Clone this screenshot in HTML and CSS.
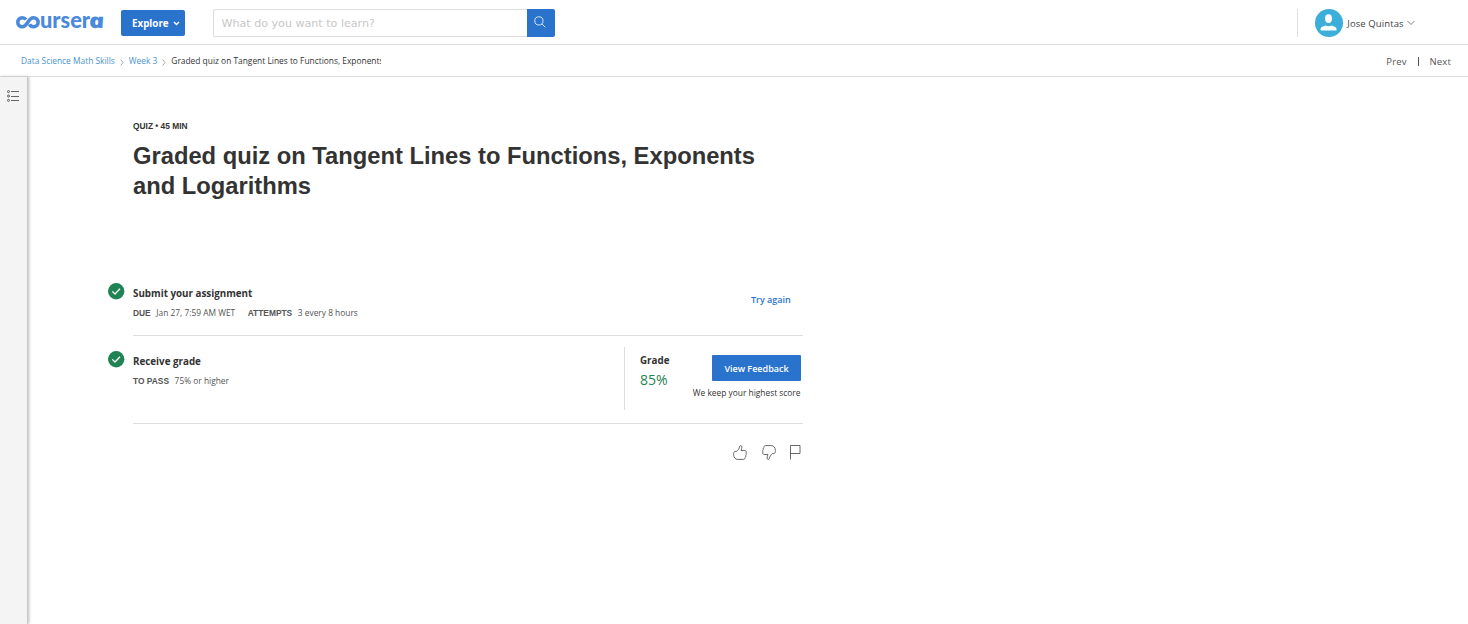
FILE: index.html
```html
<!DOCTYPE html>
<html lang="en">
<head>
<meta charset="utf-8">
<title>Graded quiz | Coursera</title>
<link rel="stylesheet" href="styles.css">
</head>
<body>
<header class="topbar">
  <a class="logo" aria-label="Coursera">
    <svg width="92" height="30" viewBox="0 0 92 30">
      <path class="logo-mark" d="M11 10.600C10.100 9.300 8.900 8.700 7.300 8.700 4.700 8.700 2.800 10.700 2.800 13.200s1.900 4.500 4.500 4.500C12.700 17.700 12.900 8.700 18.500 8.700c2.600 0 4.600 2 4.600 4.500s-2 4.500-4.600 4.500c-2 0-3.300-1-4-2.500"/>
      <text class="logo-text" x="25" y="19.200" textLength="50" lengthAdjust="spacingAndGlyphs">urser</text>
      <text class="logo-text logo-end" transform="translate(75 19.200) skewX(11)" x="0" y="0" textLength="15.500" lengthAdjust="spacingAndGlyphs">a</text>
    </svg>
  </a>
  <button class="explore"><span class="explore-label">Explore</span>
    <svg width="7" height="5" viewBox="0 0 7 5"><path d="M1 1l2.500 2.500L6 1" fill="none" stroke="#fff" stroke-width="1.400"/></svg>
  </button>
  <div class="search">
    <div class="search-field"><span class="search-hint">What do you want to learn?</span></div>
    <button class="search-button" aria-label="Search">
      <svg width="12" height="12" viewBox="0 0 12 12" fill="none" stroke="#fff" stroke-width=".8"><circle cx="4.900" cy="4.900" r="4.100"/><path d="M7.900 7.900l3.400 3.400"/></svg>
    </button>
  </div>
  <div class="account">
    <svg class="avatar" width="28" height="28" viewBox="0 0 28 28"><circle cx="14" cy="14" r="14" fill="#3bafda"/><ellipse cx="13.500" cy="9.600" rx="3.500" ry="4.400" fill="#fff"/><path d="M5.600 21.600v-1.900c0-1.300 2.100-2.400 4.800-3.200 2 1 4.300 1 6.300 0 2.700.8 4.800 1.900 4.800 3.200v1.900z" fill="#fff"/></svg>
    <span class="name">Jose Quintas</span>
    <svg width="8" height="6" viewBox="0 0 8 6"><path d="M.5 1L4 4.500 7.500 1" fill="none" stroke="#777" stroke-width=".9"/></svg>
  </div>
</header>
<nav class="subbar">
  <div class="crumbs">
    <a class="crumb">Data Science Math Skills</a>
    <svg class="sep" width="4" height="7" viewBox="0 0 4 7"><path d="M.7.500L3 3.500.7 6.500"/></svg>
    <a class="crumb">Week 3</a>
    <svg class="sep" width="4" height="7" viewBox="0 0 4 7"><path d="M.7.500L3 3.500.7 6.500"/></svg>
    <span class="crumb current">Graded quiz on Tangent Lines to Functions, Exponents</span>
  </div>
  <div class="pager"><a class="prev">Prev</a><span class="bar"></span><a class="next">Next</a></div>
</nav>
<div class="shell">
  <aside class="rail">
    <svg width="12" height="12" viewBox="0 0 12 12" fill="none" stroke="#555"><path d="M4 1.500h8M4 6.500h8M4 10.500h8" stroke-width=".9"/><circle cx="1.500" cy="1.600" r="1"/><circle cx="1.500" cy="6" r="1"/><circle cx="1.500" cy="10.400" r="1"/></svg>
  </aside>
  <main class="content">
    <p class="kicker">QUIZ • 45 MIN</p>
    <h1 class="title">Graded quiz on Tangent Lines to Functions, Exponents<br>and Logarithms</h1>
    <section class="step submit">
      <svg class="check" width="17" height="17" viewBox="0 0 17 17"><circle cx="8.200" cy="8.300" r="8.200" fill="#1f8354"/><path d="M4.300 8.400l2.700 2.600 5-5.300" fill="none" stroke="#fff" stroke-width="1.300"/></svg>
      <div class="info">
        <h2 class="heading">Submit your assignment</h2>
        <p class="meta"><b class="k">DUE</b><span class="v v-due">Jan 27, 7:59 AM WET</span><b class="k">ATTEMPTS</b><span class="v">3 every 8 hours</span></p>
      </div>
      <a class="try">Try again</a>
    </section>
    <section class="step receive">
      <svg class="check" width="17" height="17" viewBox="0 0 17 17"><circle cx="8.200" cy="8.300" r="8.200" fill="#1f8354"/><path d="M4.300 8.400l2.700 2.600 5-5.300" fill="none" stroke="#fff" stroke-width="1.300"/></svg>
      <div class="info">
        <h2 class="heading">Receive grade</h2>
        <p class="meta"><b class="k">TO PASS</b><span class="v">75% or higher</span></p>
      </div>
      <div class="result">
        <div class="grade"><span class="grade-label">Grade</span><span class="grade-value">85%</span></div>
        <div class="feedback"><button class="view"><span class="view-label">View Feedback</span></button><span class="note">We keep your highest score</span></div>
      </div>
    </section>
    <div class="reactions">
      <svg width="14" height="15" viewBox="0 0 14 15"><path d="M3.600 6.400C5.300 5 6.300 3.500 6.700 1.300 7.100.2 8.800.4 8.900 1.800c0 1.400-.5 2.500-.8 3.700h3.700c1.500.2 1.900 1.700 1.100 2.500.6.8.5 1.700-.2 2.300.4.900.1 1.700-.6 2.100 0 1.300-.6 2-1.700 2H4.500C2.500 14.400.7 12.500.6 9.500c0-1.500.4-2.600 1.200-3.100z"/></svg>
      <svg width="14" height="15" viewBox="0 0 14 15"><path d="M10.400 8.600C8.700 10 7.700 11.500 7.300 13.700c-.4 1.100-2.100.9-2.200-.5 0-1.400.5-2.500.8-3.700H2.200C.7 9.300.3 7.800 1.100 7 .5 6.200.6 5.300 1.300 4.700.9 3.800 1.200 3 1.900 2.600c0-1.300.6-2 1.700-2h5.900c2 0 3.800 1.900 3.900 4.900 0 1.500-.4 2.600-1.200 3.100z"/></svg>
      <svg width="11" height="15" viewBox="0 0 11 15"><path d="M.5 14.500V.500h9.500v8H.5"/></svg>
    </div>
  </main>
</div>
</body>
</html>
```
FILE: styles.css
```css
* { box-sizing: border-box; }
body { margin: 0; background: #fff; color: #333; font-family: "Open Sans", sans-serif; overflow: hidden; }
svg { display: block; flex: none; }
button { border: 0; padding: 0; font: inherit; color: #fff; background: #2a73cc; display: flex; align-items: center; }
h1, h2, p { margin: 0; }
span, a, b { white-space: nowrap; }
.topbar { height: 45px; border-bottom: 1px solid #dedede; display: flex; align-items: flex-start; padding: 9px 53px 0 15px; }
.logo { width: 106px; }
.logo svg { overflow: visible; }
.logo-mark { fill: none; stroke: #4a89dc; stroke-width: 3.600; }
.logo-text { font: 900 22px Lato, sans-serif; fill: #4a89dc; }
.logo-end { font: italic 800 20.500px "Open Sans", sans-serif; }
.explore { width: 64px; height: 26px; margin-top: 1px; border-radius: 2px; padding-left: 11px; gap: 4px; font-size: 9.800px; font-weight: 700; }
.search { display: flex; margin-left: 28px; }
.search-field { width: 314px; height: 28px; border: 1px solid #dedede; border-right: 0; border-radius: 2px 0 0 2px; padding: 1px 0 0 7.500px; font: 11.100px/26px "DejaVu Sans", sans-serif; color: #c7c7c7; }
.search-button { width: 28px; height: 28px; border-radius: 0 2px 2px 0; padding: 0 0 2px 7px; }
.account { margin-left: auto; border-left: 1px solid #dedede; height: 28px; padding-left: 17px; display: flex; align-items: center; }
.name { font-size: 9.500px; letter-spacing: .1px; margin: 1px 3.300px 0 4.700px; color: #444; }
.subbar { height: 32px; border-bottom: 1px solid #dedede; display: flex; justify-content: space-between; padding: 0 17px 0 21px; }
.crumbs { display: flex; align-items: center; font-size: 8.400px; }
.crumb { color: #4a94cf; line-height: 14px; }
.crumb.current { color: #333; width: 210px; overflow: hidden; }
.sep { margin: 3px 5px 0; fill: none; stroke: #aaa; }
.pager { display: flex; align-items: center; font-size: 9.500px; letter-spacing: .15px; color: #555; padding-top: 1px; }
.bar { width: 1px; height: 9px; background: #555; margin: 0 11px; }
.shell { display: flex; height: 547px; }
.rail { width: 28px; background: #f4f4f4; border-right: 1px solid #c8c8c8; box-shadow: 1px 0 3px #bbb; padding: 13px 0 0 7px; flex: none; }
.content { width: 695px; margin-left: 80px; padding-top: 43px; }
.kicker { margin-left: 25px; font: 700 8.400px/12px "Liberation Sans", sans-serif; }
.title { margin: 9px 0 0 25px; font: 700 23.740px/30px "Liberation Sans", sans-serif; white-space: nowrap; }
.step { display: flex; }
.submit { margin-top: 82px; height: 53px; }
.check { margin-right: 8px; }
.info { flex: 1; padding-top: 4px; border-bottom: 1px solid #dedede; }
.heading { font-size: 9.800px; line-height: 14px; font-weight: 700; }
.meta { display: flex; margin-top: 6px; height: 12px; font-size: 8.400px; line-height: 12px; color: #555; }
.k { font-family: "Liberation Sans", sans-serif; font-size: 8.400px; color: #555; margin-right: 5.600px; }
.v-due { margin-right: 12.500px; }
.try { font-size: 9px; font-weight: 600; color: #2a73cc; width: 52px; padding-top: 10px; line-height: 14px; border-bottom: 1px solid #dedede; }
.receive { height: 88px; padding-top: 15px; }
.result { width: 179px; display: flex; border-bottom: 1px solid #dedede; margin-top: -4px; }
.grade { border-left: 1px solid #dedede; height: 63px; padding: 7px 0 0 15px; width: 68px; display: flex; flex-direction: column; }
.grade-label { font-size: 9.800px; font-weight: 700; line-height: 14px; }
.grade-value { font-size: 14px; line-height: 20px; margin-top: 2px; color: #1f8354; }
.feedback { width: 109px; padding-top: 8px; display: flex; flex-direction: column; align-items: flex-end; }
.view { width: 89px; height: 26px; justify-content: center; border-radius: 1px; font-size: 9px; font-weight: 600; }
.note { font-size: 8.400px; line-height: 12px; margin-top: 6px; padding-right: .5px; }
.reactions { display: flex; justify-content: flex-end; gap: 15px; padding: 20.500px 2px 0 0; fill: none; stroke: #444; stroke-width: .8; }
.reactions svg:last-child { margin-left: -1px; }
```
